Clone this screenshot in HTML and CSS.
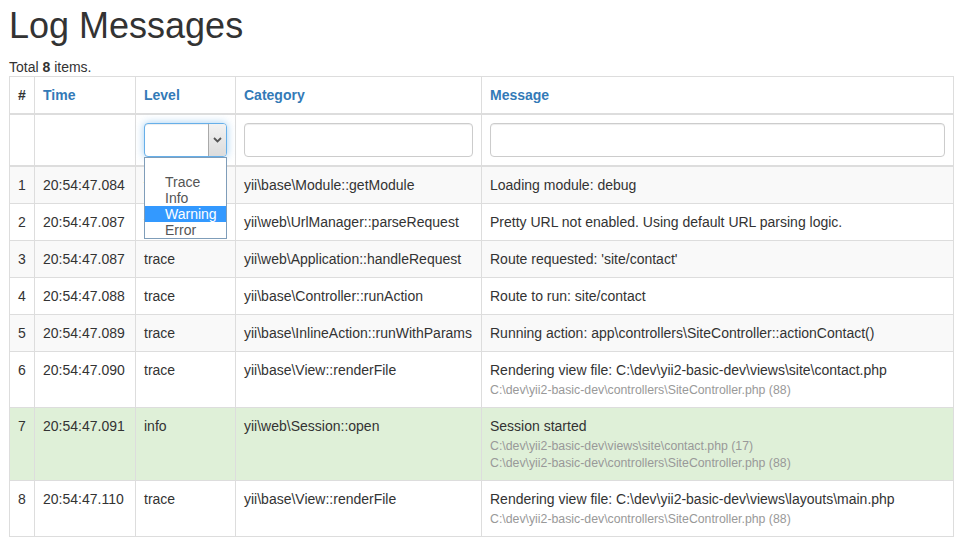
FILE: index.html
```html
<!DOCTYPE html>
<html lang="en">
<head>
<meta charset="utf-8">
<title>Log Messages</title>
<link rel="stylesheet" href="styles.css">
</head>
<body>
<div class="page">
  <h1 class="title">Log Messages</h1>
  <div class="summary">Total <b>8</b> items.</div>
  <table class="grid">
    <colgroup>
      <col class="c-num"><col class="c-time"><col class="c-level"><col class="c-cat"><col class="c-msg">
    </colgroup>
    <thead>
      <tr>
        <th>#</th>
        <th><a href="#">Time</a></th>
        <th><a href="#">Level</a></th>
        <th><a href="#">Category</a></th>
        <th><a href="#">Message</a></th>
      </tr>
      <tr class="filters">
        <td></td>
        <td></td>
        <td>
          <div class="select-wrap">
            <div class="fake-select">
              <span class="select-value"></span>
              <span class="select-arrow"><svg width="9" height="6" viewBox="0 0 9 6"><path d="M1 1 L4.5 4.5 L8 1" fill="none" stroke="#555" stroke-width="1.8"/></svg></span>
            </div>
            <ul class="select-list">
              <li class="opt blank">&nbsp;</li>
              <li class="opt">Trace</li>
              <li class="opt">Info</li>
              <li class="opt selected">Warning</li>
              <li class="opt">Error</li>
            </ul>
          </div>
        </td>
        <td><input class="form-control" type="text"></td>
        <td><input class="form-control" type="text"></td>
      </tr>
    </thead>
    <tbody>
      <tr class="odd">
        <td>1</td><td>20:54:47.084</td><td>trace</td><td>yii\base\Module::getModule</td><td>Loading module: debug</td>
      </tr>
      <tr>
        <td>2</td><td>20:54:47.087</td><td>trace</td><td>yii\web\UrlManager::parseRequest</td><td>Pretty URL not enabled. Using default URL parsing logic.</td>
      </tr>
      <tr class="odd">
        <td>3</td><td>20:54:47.087</td><td>trace</td><td>yii\web\Application::handleRequest</td><td>Route requested: 'site/contact'</td>
      </tr>
      <tr>
        <td>4</td><td>20:54:47.088</td><td>trace</td><td>yii\base\Controller::runAction</td><td>Route to run: site/contact</td>
      </tr>
      <tr class="odd">
        <td>5</td><td>20:54:47.089</td><td>trace</td><td>yii\base\InlineAction::runWithParams</td><td>Running action: app\controllers\SiteController::actionContact()</td>
      </tr>
      <tr>
        <td>6</td><td>20:54:47.090</td><td>trace</td><td>yii\base\View::renderFile</td>
        <td>Rendering view file: C:\dev\yii2-basic-dev\views\site\contact.php
          <span class="traces"><span class="trace">C:\dev\yii2-basic-dev\controllers\SiteController.php (88)</span></span></td>
      </tr>
      <tr class="success">
        <td>7</td><td>20:54:47.091</td><td>info</td><td>yii\web\Session::open</td>
        <td>Session started
          <span class="traces"><span class="trace">C:\dev\yii2-basic-dev\views\site\contact.php (17)</span>
          <span class="trace">C:\dev\yii2-basic-dev\controllers\SiteController.php (88)</span></span></td>
      </tr>
      <tr>
        <td>8</td><td>20:54:47.110</td><td>trace</td><td>yii\base\View::renderFile</td>
        <td>Rendering view file: C:\dev\yii2-basic-dev\views\layouts\main.php
          <span class="traces"><span class="trace">C:\dev\yii2-basic-dev\controllers\SiteController.php (88)</span></span></td>
      </tr>
    </tbody>
  </table>
</div>
</body>
</html>
```
FILE: styles.css
```css
* { box-sizing: border-box; }
html, body { margin: 0; padding: 0; background: #fff; }
body {
  font-family: "Liberation Sans", Arial, sans-serif;
  font-size: 14px;
  line-height: 1.42857;
  color: #333;
}
.page { padding: 6px 17px 0 9px; }
.title {
  font-size: 36px;
  font-weight: 400;
  line-height: 1.1;
  margin: 0 0 10px 0;
  color: #333;
}
.summary { height: 20px; padding-top: 1px; line-height: 20px; }
.summary b { font-weight: 700; }

.grid {
  width: 944px;
  border-collapse: collapse;
  border-spacing: 0;
  table-layout: fixed;
  border: 1px solid #ddd;
}
.c-num { width: 25px; }
.c-time { width: 101px; }
.c-level { width: 100px; }
.c-cat { width: 246px; }
.c-msg { width: 472px; }

.grid th, .grid td {
  border: 1px solid #ddd;
  padding: 8px;
  text-align: left;
  vertical-align: top;
  line-height: 20px;
  white-space: nowrap;
}
.grid thead th {
  vertical-align: bottom;
  border-bottom-width: 2px;
  font-weight: 700;
}
.grid thead td { border-bottom-width: 2px; }
.grid th a { color: #337ab7; text-decoration: none; }
.grid tr.odd td { background: #f9f9f9; }
.grid tr.success td { background: #dff0d8; }

.traces {
  display: block;
  padding-top: 2px;
}
.trace {
  display: block;
  font-size: 12.3px;
  line-height: 17px;
  color: #999;
}

.form-control {
  display: block;
  width: 100%;
  height: 34px;
  padding: 6px 12px;
  font: inherit;
  color: #555;
  background: #fff;
  border: 1px solid #ccc;
  border-radius: 4px;
  box-shadow: inset 0 1px 1px rgba(0,0,0,.075);
  margin: 0;
}

.select-wrap { position: relative; }
.fake-select {
  display: flex;
  height: 34px;
  border: 1px solid #66afe9;
  border-radius: 4px;
  background: #fff;
  box-shadow: inset 0 1px 1px rgba(0,0,0,.075), 0 0 8px rgba(102,175,233,.6);
  overflow: hidden;
}
.select-value { flex: 1; }
.select-arrow {
  width: 18px;
  display: flex;
  align-items: center;
  justify-content: center;
  background: linear-gradient(#f2f2f2, #dcdcdc);
  border-left: 1px solid #a9a9a9;
}
.select-list {
  position: absolute;
  top: 34px;
  left: 0;
  width: 83px;
  margin: 0;
  padding: 0;
  list-style: none;
  background: #fff;
  border: 1px solid #7f9db9;
  z-index: 5;
}
.opt {
  height: 16px;
  line-height: 17px;
  padding-left: 20px;
  font-size: 14px;
  color: #555;
  overflow: hidden;
}
.opt.selected { background: #3399ff; color: #fff; }
```
